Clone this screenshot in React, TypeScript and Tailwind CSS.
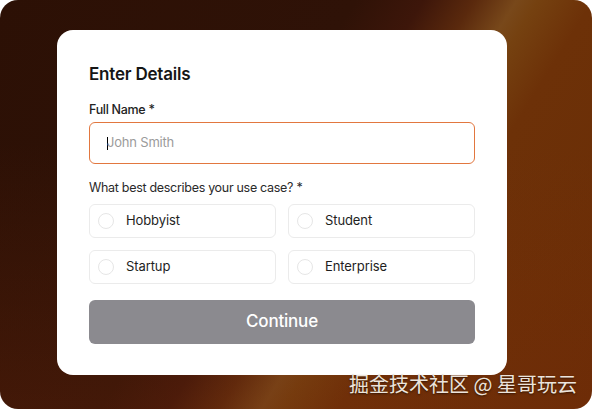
import React from "react";

const options = ["Hobbyist", "Student", "Startup", "Enterprise"];

export default function App() {
  return (
    <div className="w-[592px] h-[409px] bg-white">
      <div className="relative w-[592px] h-[409px] rounded-[18px] overflow-hidden bg-[linear-gradient(180deg,rgba(0,0,0,0)_35%,rgba(120,42,10,0.28)_100%),linear-gradient(122deg,#2c1005_0%,#2f1207_42%,#3d160a_50%,#5a290d_56%,#78481a_61%,#754110_63.5%,#6d3108_70%,#6a2d06_100%)] pl-[57px] pt-[30px] font-['Inter',sans-serif]">
        <div className="w-[450px] h-[345px] bg-white rounded-[16px] px-[32px] pt-[32px] flex flex-col">
          <h1 className="text-[17px] leading-[24px] font-semibold text-[#161616] tracking-[-0.2px]">Enter Details</h1>
          <label className="mt-[15px] text-[12.5px] leading-[18px] font-medium text-[#222] tracking-[-0.3px]">Full Name *</label>
          <div className="mt-[3px] h-[42px] rounded-[6px] border border-[#e2773f] flex items-center pl-[17px]">
            <span className="w-px h-[13px] bg-black"></span>
            <span className="text-[13px] text-[#9b9b9b] -ml-px tracking-[-0.2px]">John Smith</span>
          </div>
          <div className="mt-[15px] text-[12.5px] leading-[18px] font-normal text-[#2a2a2a] tracking-[-0.3px]">What best describes your use case? *</div>
          <div className="mt-[7px] grid grid-cols-2 gap-x-[12px] gap-y-[12px]">
            {options.map((o) => (
              <div key={o} className="h-[34px] rounded-[6px] border border-[#ebebeb] flex items-center pl-[8px]">
                <span className="w-[16px] h-[16px] rounded-full border border-[#e6e6e6] bg-white"></span>
                <span className="ml-[12px] text-[13px] text-[#1e1e1e] tracking-[-0.1px]">{o}</span>
              </div>
            ))}
          </div>
          <button className="mt-[16px] h-[44px] rounded-[6px] bg-[#8b8a8f] text-white text-[17px] font-medium tracking-[-0.2px]">Continue</button>
        </div>
        <div className="absolute left-[349px] top-[373px] text-[20px] leading-[22px] text-[#ece4dc] font-['Noto_Sans_CJK_SC',sans-serif] [text-shadow:0_1px_2px_rgba(0,0,0,0.55)] whitespace-nowrap">
          掘金技术社区 @ 星哥玩云
        </div>
      </div>
    </div>
  );
}
